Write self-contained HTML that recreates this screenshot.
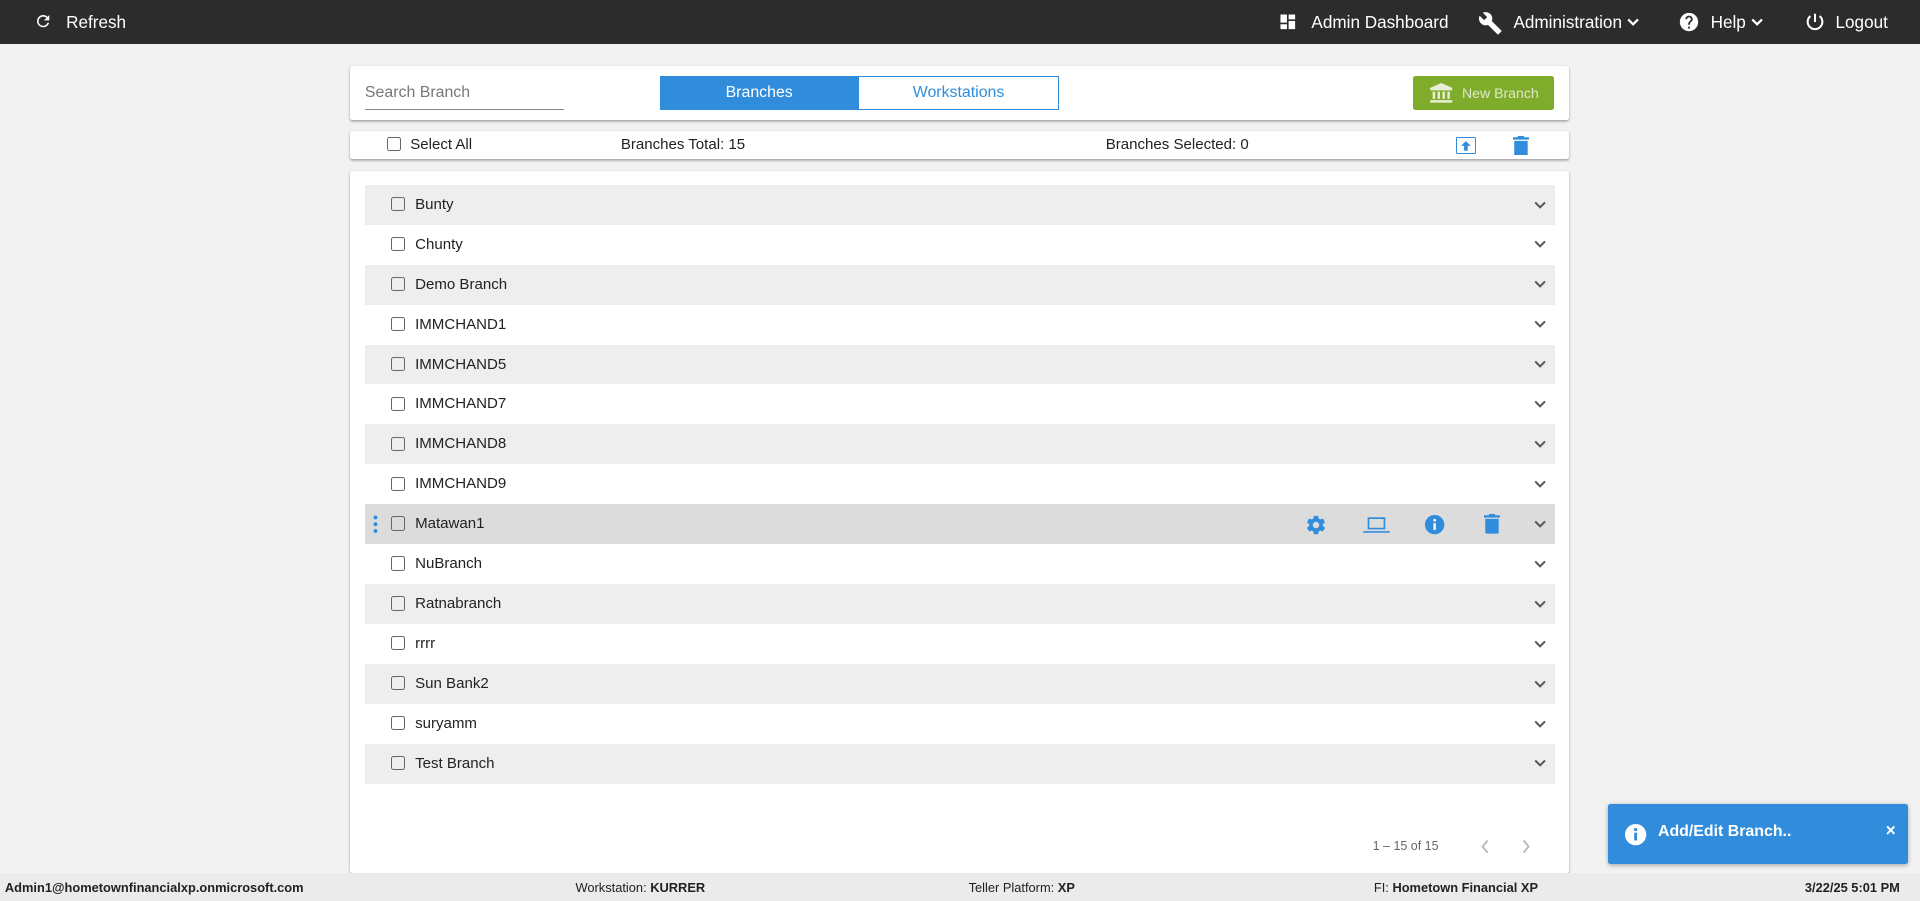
<!DOCTYPE html>
<html><head><meta charset="utf-8"><style>
html,body{margin:0;padding:0;width:1920px;height:901px;overflow:hidden;background:#f2f2f2}
#w{zoom:1.22449;width:1568px;height:736px;position:relative;font-family:"Liberation Sans",Arial,sans-serif;color:#222}
.top{position:absolute;left:0;top:0;width:1568px;height:36px;background:#2c2c2c;color:#fff;font-size:14px}
.top span,.top svg{position:absolute}
.card{position:absolute;background:#fff;border-radius:2px;box-shadow:0 1px 2px rgba(0,0,0,.35)}
.cb{position:absolute;width:10px;height:10px;border:1.6px solid #666;border-radius:2px}
.row{position:absolute;left:12px;width:972px;height:32.6px;font-size:12.3px}
.row .cb{left:21px;top:10px}
.row .t{position:absolute;left:41px;top:9px}
.row svg.ch{position:absolute;left:955px;top:12px}
.g{background:#eeeeee}
.foot{position:absolute;left:0;top:713px;width:1568px;height:23px;background:#ebebeb;font-size:10.5px}
.foot span{position:absolute;top:6px}
</style></head><body><div id="w">
<div class="top">
<svg style="left:28px;top:10px" width="15" height="15" viewBox="0 0 24 24"><path fill="#fff" d="M17.65 6.35A7.96 7.96 0 0 0 12 4a8 8 0 1 0 7.73 10h-2.08A6 6 0 1 1 12 6c1.66 0 3.14.69 4.22 1.78L13 11h7V4z"/></svg>
<span style="left:54px;top:10px">Refresh</span>
<svg style="left:1044px;top:10px" width="16" height="16" viewBox="0 0 24 24"><path fill="#fff" d="M3 13h8V3H3zm0 8h8v-6H3zm10 0h8V11h-8zm0-18v6h8V3z"/></svg>
<span style="left:1071px;top:10px">Admin Dashboard</span>
<svg style="left:1207px;top:9px" width="20" height="20" viewBox="0 0 24 24"><path fill="#fff" d="M22.7 19l-9.1-9.1c.9-2.3.4-5-1.5-6.9-2-2-5-2.4-7.4-1.3L9 6 6 9 1.6 4.7C.4 7.1.9 10.1 2.9 12.1c1.9 1.9 4.6 2.4 6.9 1.5l9.1 9.1c.4.4 1 .4 1.4 0l2.3-2.3c.5-.4.5-1.1.1-1.4z"/></svg>
<span style="left:1236px;top:10px">Administration</span>
<svg style="left:1329px;top:14px" width="10" height="8" viewBox="0 0 10 8"><path d="M1 2l4 4 4-4" stroke="#fff" stroke-width="1.8" fill="none"/></svg>
<svg style="left:1370px;top:9px" width="18" height="18" viewBox="0 0 24 24"><path fill="#fff" d="M12 2a10 10 0 1 0 0 20 10 10 0 0 0 0-20zm1 17h-2v-2h2zm2.07-7.75l-.9.92C13.45 12.9 13 13.5 13 15h-2v-.5c0-1.1.45-2.1 1.17-2.83l1.24-1.26A1.990 1.990 0 0 0 12 7a2 2 0 0 0-2 2H8a4 4 0 1 1 8 0c0 .88-.36 1.68-.93 2.25z"/></svg>
<span style="left:1397px;top:10px">Help</span>
<svg style="left:1430px;top:14px" width="10" height="8" viewBox="0 0 10 8"><path d="M1 2l4 4 4-4" stroke="#fff" stroke-width="1.8" fill="none"/></svg>
<svg style="left:1473px;top:9px" width="18" height="18" viewBox="0 0 24 24"><path fill="none" stroke="#fff" stroke-width="2.2" d="M12 3v9M7 5.5a8 8 0 1 0 10 0"/></svg>
<span style="left:1499px;top:10px">Logout</span>
</div>

<div class="card" style="left:286px;top:54px;width:995px;height:44px">
<span style="position:absolute;left:12px;top:15px;font-size:13px;color:#777">Search Branch</span>
<div style="position:absolute;left:12px;top:35px;width:163px;height:1px;background:#888"></div>
<div style="position:absolute;left:253px;top:8px;width:162px;height:28px;background:#318ddc;color:#fff;font-size:13px;text-align:center;line-height:28px">Branches</div>
<div style="position:absolute;left:415px;top:8px;width:162px;height:26px;border:1px solid #318ddc;color:#318ddc;font-size:13px;text-align:center;line-height:26px">Workstations</div>
<div style="position:absolute;left:868px;top:8px;width:115px;height:28px;background:#80ac2c;border-radius:2px;color:#dfe8c8;font-size:11.5px;line-height:28px">
<svg style="position:absolute;left:13px;top:6px" width="20" height="17" viewBox="0 0 20 17"><path fill="#e8eed8" d="M10 0L1 4v2h18V4zM3 7h2v6H3zm4 0h2v6H7zm4 0h2v6h-2zm4 0h2v6h-2zM1 14h18v2H1z"/></svg>
<span style="position:absolute;left:40px">New Branch</span></div>
</div>

<div class="card" style="left:286px;top:107px;width:995px;height:23px;font-size:12.3px">
<div class="cb" style="left:30px;top:5px"></div>
<span style="position:absolute;left:49px;top:4px">Select All</span>
<span style="position:absolute;left:221px;top:4px">Branches Total: 15</span>
<span style="position:absolute;left:617px;top:4px">Branches Selected: 0</span>
<div style="position:absolute;left:903px;top:5px;width:15px;height:12px;border:1.5px solid #318ddc;border-radius:1px"></div>
<svg style="position:absolute;left:907px;top:8px" width="8" height="8" viewBox="0 0 8 8"><path fill="#318ddc" d="M4 0L0 4h2.5v4h3V4H8z"/></svg>
<svg style="position:absolute;left:950px;top:4px" width="13" height="16" viewBox="0 0 13 16"><path fill="#318ddc" d="M4 0h5v1h4v2H0V1h4zM1 4h11v11a1 1 0 0 1-1 1H2a1 1 0 0 1-1-1z"/></svg>
</div>

<div class="card" style="left:286px;top:140px;width:995px;height:573px">
<div class="row g" style="top:11px"><div class="cb"></div><span class="t">Bunty</span><svg class="ch" width="10" height="8"><path d="M1 2l4 4 4-4" stroke="#555" stroke-width="1.6" fill="none"/></svg></div>
<div class="row" style="top:43.6px"><div class="cb"></div><span class="t">Chunty</span><svg class="ch" width="10" height="8"><path d="M1 2l4 4 4-4" stroke="#555" stroke-width="1.6" fill="none"/></svg></div>
<div class="row g" style="top:76.2px"><div class="cb"></div><span class="t">Demo Branch</span><svg class="ch" width="10" height="8"><path d="M1 2l4 4 4-4" stroke="#555" stroke-width="1.6" fill="none"/></svg></div>
<div class="row" style="top:108.8px"><div class="cb"></div><span class="t">IMMCHAND1</span><svg class="ch" width="10" height="8"><path d="M1 2l4 4 4-4" stroke="#555" stroke-width="1.6" fill="none"/></svg></div>
<div class="row g" style="top:141.4px"><div class="cb"></div><span class="t">IMMCHAND5</span><svg class="ch" width="10" height="8"><path d="M1 2l4 4 4-4" stroke="#555" stroke-width="1.6" fill="none"/></svg></div>
<div class="row" style="top:174px"><div class="cb"></div><span class="t">IMMCHAND7</span><svg class="ch" width="10" height="8"><path d="M1 2l4 4 4-4" stroke="#555" stroke-width="1.6" fill="none"/></svg></div>
<div class="row g" style="top:206.6px"><div class="cb"></div><span class="t">IMMCHAND8</span><svg class="ch" width="10" height="8"><path d="M1 2l4 4 4-4" stroke="#555" stroke-width="1.6" fill="none"/></svg></div>
<div class="row" style="top:239.2px"><div class="cb"></div><span class="t">IMMCHAND9</span><svg class="ch" width="10" height="8"><path d="M1 2l4 4 4-4" stroke="#555" stroke-width="1.6" fill="none"/></svg></div>
<div class="row" style="top:271.8px;background:#dcdcdc">
<svg style="position:absolute;left:7px;top:9px" width="4" height="15"><circle cx="2" cy="2" r="1.6" fill="#318ddc"/><circle cx="2" cy="7.5" r="1.6" fill="#318ddc"/><circle cx="2" cy="13" r="1.6" fill="#318ddc"/></svg>
<div class="cb"></div><span class="t">Matawan1</span>
<svg style="position:absolute;left:768px;top:8px" width="18" height="18" viewBox="0 0 24 24"><path fill="#318ddc" d="M19.4 13c.04-.33.06-.66.06-1s-.02-.67-.07-1l2.11-1.65a.5.5 0 0 0 .12-.64l-2-3.460a.5.5 0 0 0-.61-.22l-2.49 1a7.3 7.3 0 0 0-1.69-.98l-.38-2.650A.49.49 0 0 0 14 2h-4a.49.49 0 0 0-.49.42l-.38 2.65c-.61.25-1.17.59-1.69.98l-2.49-1a.5.5 0 0 0-.61.22l-2 3.46a.49.49 0 0 0 .12.64L4.57 11c-.04.33-.07.67-.07 1s.02.67.07 1l-2.11 1.65a.5.5 0 0 0-.12.64l2 3.46c.12.22.39.3.61.22l2.49-1c.52.4 1.08.73 1.69.98l.38 2.65c.03.24.24.42.49.42h4c.25 0 .46-.18.49-.42l.38-2.65c.61-.25 1.17-.59 1.69-.98l2.49 1c.23.09.49 0 .61-.22l2-3.46a.5.5 0 0 0-.12-.64zM12 15.5a3.5 3.5 0 1 1 0-7 3.5 3.5 0 0 1 0 7z"/></svg>
<svg style="position:absolute;left:815px;top:8px" width="22" height="18" viewBox="0 0 24 20"><path fill="#318ddc" d="M4 3h16v11H4zm1.5 1.5v8h13v-8zM0 15.5h24V17H0z"/></svg>
<svg style="position:absolute;left:864px;top:7px" width="19" height="19" viewBox="0 0 24 24"><circle cx="12" cy="12" r="10" fill="#318ddc"/><rect x="10.8" y="10.5" width="2.4" height="7" fill="#fff"/><circle cx="12" cy="7.5" r="1.4" fill="#fff"/></svg>
<svg style="position:absolute;left:914px;top:8px" width="13" height="16" viewBox="0 0 13 16"><path fill="#318ddc" d="M4 0h5v1h4v2H0V1h4zM1 4h11v11a1 1 0 0 1-1 1H2a1 1 0 0 1-1-1z"/></svg>
<svg class="ch" width="10" height="8"><path d="M1 2l4 4 4-4" stroke="#555" stroke-width="1.6" fill="none"/></svg></div>
<div class="row" style="top:304.4px"><div class="cb"></div><span class="t">NuBranch</span><svg class="ch" width="10" height="8"><path d="M1 2l4 4 4-4" stroke="#555" stroke-width="1.6" fill="none"/></svg></div>
<div class="row g" style="top:337px"><div class="cb"></div><span class="t">Ratnabranch</span><svg class="ch" width="10" height="8"><path d="M1 2l4 4 4-4" stroke="#555" stroke-width="1.6" fill="none"/></svg></div>
<div class="row" style="top:369.6px"><div class="cb"></div><span class="t">rrrr</span><svg class="ch" width="10" height="8"><path d="M1 2l4 4 4-4" stroke="#555" stroke-width="1.6" fill="none"/></svg></div>
<div class="row g" style="top:402.2px"><div class="cb"></div><span class="t">Sun Bank2</span><svg class="ch" width="10" height="8"><path d="M1 2l4 4 4-4" stroke="#555" stroke-width="1.6" fill="none"/></svg></div>
<div class="row" style="top:434.8px"><div class="cb"></div><span class="t">suryamm</span><svg class="ch" width="10" height="8"><path d="M1 2l4 4 4-4" stroke="#555" stroke-width="1.6" fill="none"/></svg></div>
<div class="row g" style="top:467.4px"><div class="cb"></div><span class="t">Test Branch</span><svg class="ch" width="10" height="8"><path d="M1 2l4 4 4-4" stroke="#555" stroke-width="1.6" fill="none"/></svg></div>
<span style="position:absolute;left:835px;top:545px;font-size:10.2px;color:#666">1 – 15 of 15</span>
<svg style="position:absolute;left:922px;top:544px" width="10" height="14"><path d="M7 2L3 7l4 5" stroke="#bbb" stroke-width="1.6" fill="none"/></svg>
<svg style="position:absolute;left:955px;top:544px" width="10" height="14"><path d="M3 2l4 5-4 5" stroke="#bbb" stroke-width="1.6" fill="none"/></svg>
</div>

<div style="position:absolute;left:1313px;top:657px;width:245px;height:49px;background:#318ddc;border-radius:2px;box-shadow:0 1px 4px rgba(0,0,0,.3);color:#fff">
<svg style="position:absolute;left:13px;top:15px" width="19" height="19" viewBox="0 0 24 24"><circle cx="12" cy="12" r="11" fill="#fff"/><rect x="10.5" y="10" width="3" height="8" fill="#318ddc"/><circle cx="12" cy="6.8" r="1.7" fill="#318ddc"/></svg>
<span style="position:absolute;left:41px;top:15px;font-weight:bold;font-size:13px">Add/Edit Branch..</span>
<span style="position:absolute;left:227px;top:13px;font-weight:bold;font-size:14px">×</span>
</div>

<div class="foot">
<span style="left:4px;font-weight:bold">Admin1@hometownfinancialxp.onmicrosoft.com</span>
<span style="left:470px">Workstation: <b>KURRER</b></span>
<span style="left:791px">Teller Platform: <b>XP</b></span>
<span style="left:1122px">FI: <b>Hometown Financial XP</b></span>
<span style="left:1474px;font-weight:bold">3/22/25 5:01 PM</span>
</div>
</div></body></html>
